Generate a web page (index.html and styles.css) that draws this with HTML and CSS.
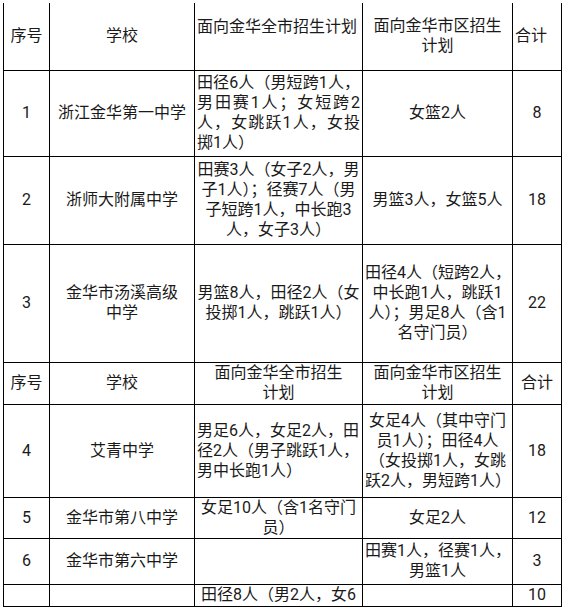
FILE: index.html
```html
<!DOCTYPE html>
<html lang="zh-CN">
<head>
<meta charset="utf-8">
<title>招生计划</title>
<link rel="stylesheet" href="styles.css">
</head>
<body>
<table class="plan">
  <colgroup>
    <col class="c1"><col class="c2"><col class="c3"><col class="c4"><col class="c5">
  </colgroup>
  <tbody>
    <tr class="h-head1">
      <td>序号</td>
      <td>学校</td>
      <td class="left top">面向金华全市招生计划</td>
      <td>面向金华市区招生<br>计划</td>
      <td class="left">合计</td>
    </tr>
    <tr class="h-r1">
      <td>1</td>
      <td>浙江金华第一中学</td>
      <td class="just">
        <span class="ln">田径6人（男短跨1人，</span>
        <span class="ln">男田赛1人；女短跨2</span>
        <span class="ln">人，女跳跃1人，女投</span>
        <span class="ln last">掷1人）</span>
      </td>
      <td>女篮2人</td>
      <td>8</td>
    </tr>
    <tr class="h-r2">
      <td>2</td>
      <td>浙师大附属中学</td>
      <td>田赛3人（女子2人，男<br>子1人）；径赛7人（男<br>子短跨1人，中长跑3<br>人，女子3人）</td>
      <td>男篮3人，女篮5人</td>
      <td>18</td>
    </tr>
    <tr class="h-r3">
      <td>3</td>
      <td>金华市汤溪高级<br>中学</td>
      <td>男篮8人，田径2人（女<br>投掷1人，跳跃1人）</td>
      <td>田径4人（短跨2人，<br>中长跑1人，跳跃1<br>人）；男足8人（含1<br>名守门员）</td>
      <td>22</td>
    </tr>
    <tr class="h-head2">
      <td>序号</td>
      <td>学校</td>
      <td>面向金华全市招生<br>计划</td>
      <td>面向金华市区招生<br>计划</td>
      <td>合计</td>
    </tr>
    <tr class="h-r4">
      <td>4</td>
      <td>艾青中学</td>
      <td class="left">男足6人，女足2人，田<br>径2人（男子跳跃1人，<br>男中长跑1人）</td>
      <td>女足4人（其中守门<br>员1人）；田径4人<br>（女投掷1人，女跳<br>跃2人，男短跨1人）</td>
      <td>18</td>
    </tr>
    <tr class="h-r5">
      <td>5</td>
      <td>金华市第八中学</td>
      <td>女足10人（含1名守门<br>员）</td>
      <td>女足2人</td>
      <td>12</td>
    </tr>
    <tr class="h-r6">
      <td>6</td>
      <td>金华市第六中学</td>
      <td></td>
      <td>田赛1人，径赛1人，<br>男篮1人</td>
      <td>3</td>
    </tr>
    <tr class="h-r7">
      <td></td>
      <td></td>
      <td class="cut">田径8人（男2人，女6</td>
      <td></td>
      <td>10</td>
    </tr>
  </tbody>
</table>
</body>
</html>
```

FILE: styles.css
```css
html, body {
  margin: 0;
  padding: 0;
  background: #ffffff;
}

body {
  font-family: Roboto, "Noto Sans CJK SC", sans-serif;
  font-size: 16px;
  color: #1a1a1a;
}

.plan {
  margin: 3px 0 0 3px;
  border-collapse: collapse;
  table-layout: fixed;
  width: 559px;
}

.c1 { width: 46px; }
.c2 { width: 145px; }
.c3 { width: 168px; }
.c4 { width: 150px; }
.c5 { width: 49px; }

.plan td {
  border: 1px solid #000;
  padding: 0 2px;
  text-align: center;
  vertical-align: middle;
  line-height: 20px;
  white-space: nowrap;
  overflow: hidden;
}

.h-head1 td { border-top: none; }

.plan td.left { text-align: left; }
.plan td.top { vertical-align: top; padding-top: 14px; }

.plan td.just { text-align: left; }
.ln {
  display: block;
  text-align: justify;
  text-align-last: justify;
}
.ln.last { text-align-last: left; }

.plan td.cut { vertical-align: top; }

.h-head1 { height: 67px; }
.h-r1 { height: 86px; }
.h-r2 { height: 88px; }
.h-r3 { height: 118px; }
.h-head2 { height: 42px; }
.h-r4 { height: 93px; }
.h-r5 { height: 40px; }
.h-r6 { height: 46px; }
.h-r7 { height: 22px; }
```
